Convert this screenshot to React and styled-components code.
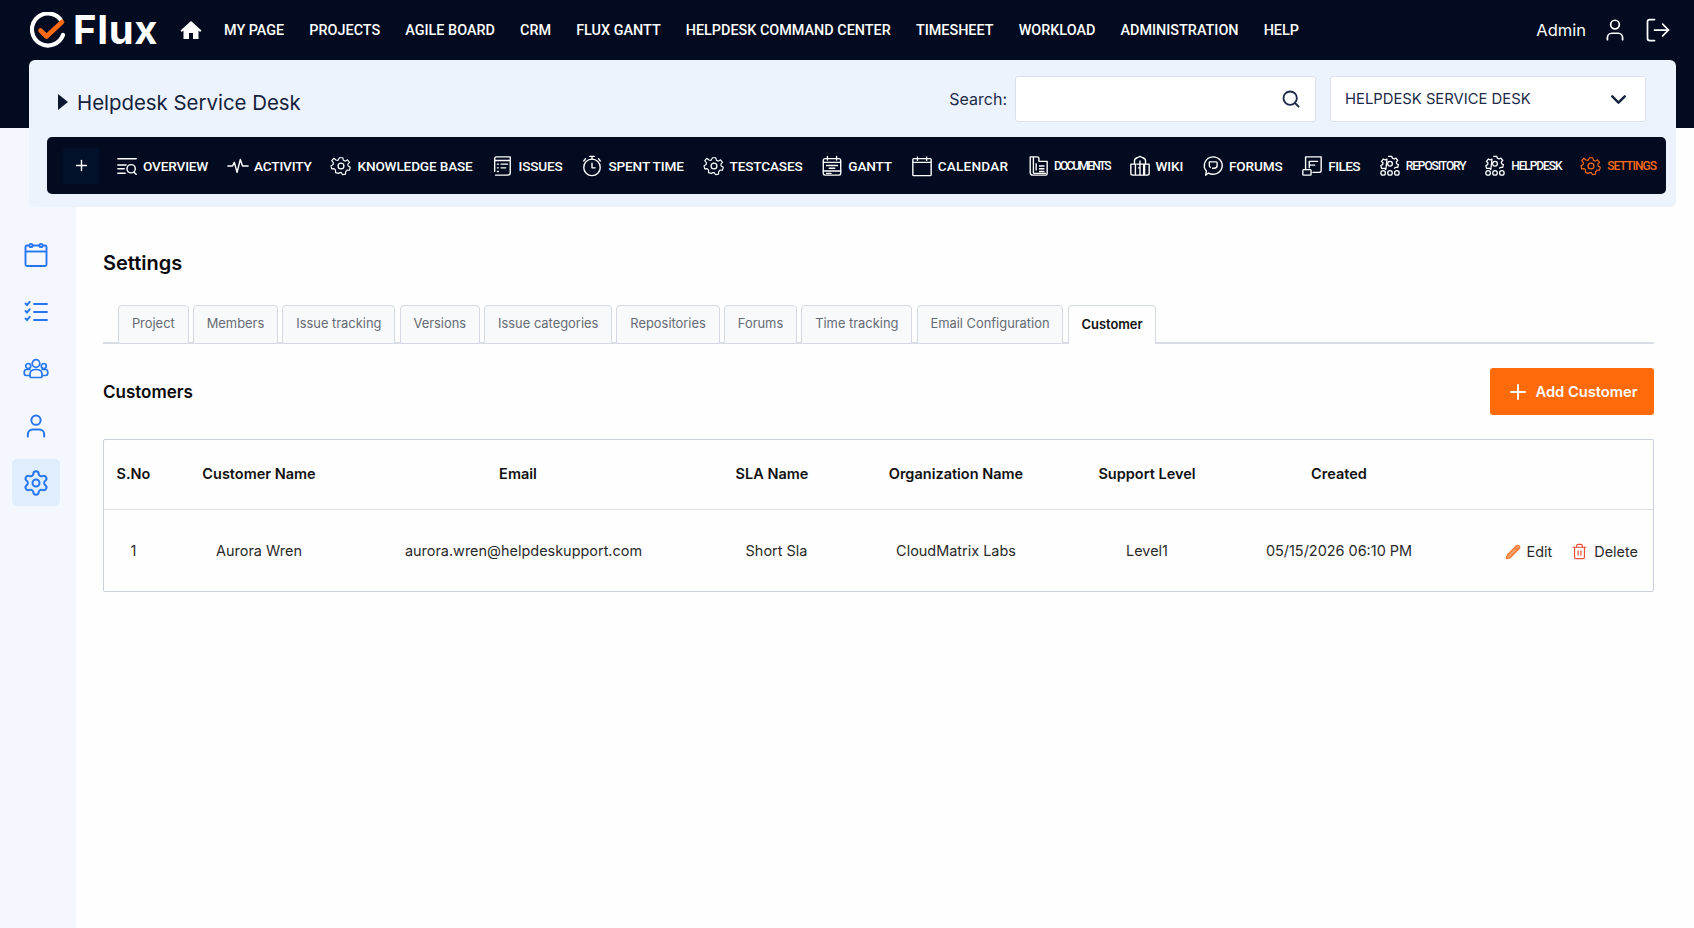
import React from "react";
import styled, { createGlobalStyle } from "styled-components";
import {
  ChevronDown,
  LogOut,
  Pencil,
  Plus,
  Search,
  Settings,
  Trash2,
  User,
} from "lucide-react";

const GlobalStyle = createGlobalStyle`
  html, body {
    margin: 0;
    padding: 0;
    background: #fefefe;
    font-family: Inter, "Liberation Sans", sans-serif;
  }
  * {
    box-sizing: border-box;
  }
`;

const Page = styled.div`
  width: 1694px;
  height: 928px;
  overflow: hidden;
  display: flex;
  flex-direction: column;
`;

const TopArea = styled.div`
  height: 207px;
  flex: none;
  background:
    linear-gradient(#020b20 128px, transparent 128px),
    linear-gradient(90deg, #f4f8fe 76px, #fefefe 76px);
`;

const TopBar = styled.header`
  height: 60px;
  padding: 0 22px 0 30px;
  display: flex;
  align-items: center;
  color: #fff;
`;

const Logo = styled.div`
  display: flex;
  align-items: center;
  gap: 6px;
  width: 149px;
  flex: none;
`;

const LogoText = styled.span`
  font-size: 40px;
  line-height: 1;
  font-weight: 700;
  letter-spacing: 0.7px;
`;

const HomeLink = styled.a`
  display: flex;
  margin: 0 21px 0 0;
  color: #fff;
`;

const MainMenu = styled.nav`
  display: flex;
  gap: 25.1px;
  flex: 1;
`;

const MenuLink = styled.a`
  font-family: Roboto, sans-serif;
  font-size: 14.4px;
  font-weight: 500;
  color: #fff;
  white-space: nowrap;
`;

const UserBox = styled.div`
  display: flex;
  align-items: center;
  gap: 16px;
`;

const UserName = styled.span`
  font-size: 16.5px;
`;

const ProjectPanel = styled.section`
  height: 147px;
  margin: 0 18px 0 29px;
  padding: 16px 10px 13px 18px;
  background: #edf3fc;
  border-radius: 6px;
  display: flex;
  flex-direction: column;
  justify-content: space-between;
`;

const PanelHead = styled.div`
  display: flex;
  align-items: center;
  padding: 0 20px 0 11px;
`;

const ProjectTitle = styled.h2`
  margin: 6px 0 0;
  flex: 1;
  display: flex;
  align-items: center;
  gap: 9px;
  font-size: 20.4px;
  font-weight: 400;
  color: #14213d;
`;

const Caret = styled.span`
  width: 0;
  height: 0;
  border-left: 10px solid #0b1730;
  border-top: 8px solid transparent;
  border-bottom: 8px solid transparent;
`;

const SearchLabel = styled.label`
  font-size: 16px;
  color: #1c2a48;
  margin-right: 8px;
`;

const FieldBox = styled.div`
  height: 46px;
  width: ${(p) => p.$width}px;
  background: #fff;
  border: 1px solid #dbe2ee;
  border-radius: 3px;
  display: flex;
  align-items: center;
  justify-content: space-between;
  padding: 0 14px;
  font-size: 14.8px;
  color: #1c2a48;
  margin-left: ${(p) => p.$gap || 0}px;
`;

const ProjectNav = styled.nav`
  height: 57px;
  background: #020b20;
  border-radius: 5px;
  display: flex;
  align-items: center;
  padding: 0 0 0 16px;
  color: #fff;
`;

const PlusBox = styled.span`
  width: 36px;
  height: 36px;
  margin-right: 17px;
  background: #031029;
  display: flex;
  align-items: center;
  justify-content: center;
  flex: none;
`;

const NavItem = styled.a`
  display: flex;
  align-items: center;
  gap: 5px;
  margin-right: 18.8px;
  font-family: Roboto, sans-serif;
  font-size: ${(p) => (p.$small ? 12 : 13.6)}px;
  font-weight: 500;
  letter-spacing: ${(p) => p.$spacing}px;
  white-space: nowrap;
  color: ${(p) => (p.$active ? "#ff6a13" : "#fff")};
`;

const Body = styled.div`
  flex: 1;
  display: flex;
`;

const SideBar = styled.aside`
  width: 76px;
  flex: none;
  background: #f4f8fe;
  padding: 24px 0 0 12px;
  display: flex;
  flex-direction: column;
  gap: 10px;
`;

const SideItem = styled.a`
  width: 48px;
  height: 47px;
  border-radius: 5px;
  display: flex;
  align-items: center;
  justify-content: center;
  color: #2676f0;
  background: ${(p) => (p.$active ? "#e0edfd" : "transparent")};
`;

const Main = styled.main`
  flex: 1;
  padding: 44px 40px 0 27px;
  background: #fefefe;
`;

const PageTitle = styled.h1`
  margin: 0 0 30px;
  font-size: 20px;
  line-height: 24px;
  font-weight: 600;
  color: #0a0a0a;
`;

const Tabs = styled.div`
  display: flex;
  gap: 4.2px;
  padding-left: 15px;
  border-bottom: 2px solid #d9dce5;
  height: 39px;
`;

const Tab = styled.a`
  height: 39px;
  padding: 0 12.9px 2px;
  display: flex;
  align-items: center;
  justify-content: center;
  font-size: 12.9px;
  font-weight: ${(p) => (p.$active ? 600 : 400)};
  color: ${(p) => (p.$active ? "#111" : "#666b75")};
  background: ${(p) => (p.$active ? "#fefefe" : "#f8f9fb")};
  border: 1px solid #d5d9e3;
  border-bottom: ${(p) => (p.$active ? "none" : "1px solid #d5d9e3")};
  border-radius: 4px 4px 0 0;
  white-space: nowrap;
`;

const SectionHead = styled.div`
  display: flex;
  align-items: center;
  justify-content: space-between;
  margin-top: 24px;
`;

const SectionTitle = styled.h3`
  margin: 0;
  font-size: 17px;
  font-weight: 600;
  color: #0a0a0a;
`;

const AddButton = styled.button`
  width: 164px;
  height: 47px;
  border: none;
  border-radius: 3px;
  background: #ff6a0a;
  color: #fff;
  display: flex;
  align-items: center;
  justify-content: center;
  gap: 5px;
  font-family: inherit;
  font-size: 14.7px;
  font-weight: 600;
`;

const TableBox = styled.div`
  margin-top: 24px;
  border: 1px solid #c9cfdb;
  border-radius: 2px;
`;

const Table = styled.table`
  width: 100%;
  table-layout: fixed;
  border-collapse: collapse;
`;

const Column = styled.col`
  width: ${(p) => p.$width}px;
`;

const HeadCell = styled.th`
  height: 69px;
  padding: 0 ${(p) => p.$right || 0}px 2px 0;
  font-size: 14.5px;
  font-weight: 600;
  color: #111;
  border-bottom: 1px solid #dcdfe6;
`;

const Cell = styled.td`
  height: 82px;
  padding: 0 0 0 ${(p) => p.$left || 0}px;
  text-align: center;
  font-size: 14.45px;
  color: #2a2a2a;
  white-space: nowrap;
`;

const Actions = styled.div`
  display: flex;
  justify-content: flex-end;
  align-items: center;
  padding: 3px 15px 0 0;
  gap: 19px;
`;

const ActionLink = styled.a`
  display: flex;
  align-items: center;
  gap: 6px;
  color: #2a2a2a;
  svg {
    color: ${(p) => p.$tone};
  }
`;

const ActivityIcon = () => (
  <svg width="22" height="22" viewBox="0 0 24 24" fill="none" stroke="currentColor" strokeWidth="1.6" strokeLinecap="round" strokeLinejoin="round">
    <path d="M1 12h5l2-4 3 11 3.500-14 2.500 7h6" />
  </svg>
);

const OverviewIcon = () => (
  <svg width="22" height="22" viewBox="0 0 24 24" fill="none" stroke="currentColor" strokeWidth="1.6" strokeLinecap="round">
    <path d="M2 4h20M2 11h9M2 15h7M2 20h8" />
    <circle cx="16.5" cy="15" r="4.5" />
    <path d="M20 19l2 2" />
  </svg>
);

const KnowledgeIcon = () => (
  <svg width="22" height="22" viewBox="0 0 24 24" fill="none" stroke="currentColor" strokeWidth="1.4" strokeLinejoin="round">
    <path d="M10 2h4l.6 3 2.5 1.100 2.600-1.600 2.400 3-2 2.200.3 2.300 2.600 1.500-1 3.700-3-.2-1.600 2-.1 2.900-3.600.7-1.600-2.500h-2.200L8.700 21l-3.600-1 .1-3-1.700-1.800-3 .2-.8-3.700 2.600-1.500.2-2.400-1.900-2.200 2.400-2.900L5.700 4.700 8 5.400z" transform="translate(1.400 1.200) scale(.9)" />
    <circle cx="12" cy="12" r="3.200" />
  </svg>
);

const IssuesIcon = () => (
  <svg width="22" height="22" viewBox="0 0 24 24" fill="none" stroke="currentColor" strokeWidth="1.5" strokeLinecap="round" strokeLinejoin="round">
    <path d="M4 18V4q0-2 2-2h14M4 6h17M21 2v17q0 3-3 3H5" />
    <path d="M7 10h1M11 10h7M7 14h1M11 14h5M7 18h1" />
  </svg>
);

const TimerIcon = () => (
  <svg width="22" height="22" viewBox="0 0 24 24" fill="none" stroke="currentColor" strokeWidth="1.500" strokeLinecap="round" strokeLinejoin="round">
    <circle cx="12" cy="13.500" r="9" />
    <path d="M9.500 1.500h5M12 1.500v3M19 4l2 2.500M5 4 3 6.500M12 9v5h3.500" />
  </svg>
);

const GanttIcon = () => (
  <svg width="22" height="22" viewBox="0 0 24 24" fill="none" stroke="currentColor" strokeWidth="1.5" strokeLinecap="round">
    <rect x="2.500" y="4" width="19" height="18" rx="2" />
    <path d="M7 1.500v4M17 1.500v4M2.500 8h19M6 11.500h12M9 14.500h6M2.500 17.500h19M6 20h5" />
  </svg>
);

const CalendarIcon = () => (
  <svg width="22" height="22" viewBox="0 0 24 24" fill="none" stroke="currentColor" strokeWidth="1.5">
    <rect x="2" y="4" width="20" height="18.500" rx="1" />
    <path d="M2 8h20M7 1.500v5M17 1.500v5" />
  </svg>
);

const DocumentsIcon = () => (
  <svg width="22" height="22" viewBox="0 0 24 24" fill="none" stroke="currentColor" strokeWidth="1.5" strokeLinejoin="round">
    <path d="M6 2H3.500v17q0 3 3 3h14q1.500 0 1.500-2V7h-9V3.500Q13 2 11 2z" />
    <path d="M7 2v17q0 1 1 1h13" />
    <path d="M10 9v8M13 12h6M13 15h6M13 18h6" />
  </svg>
);

const WikiIcon = () => (
  <svg width="22" height="22" viewBox="0 0 24 24" fill="none" stroke="currentColor" strokeWidth="1.5" strokeLinejoin="round">
    <path d="M2 10h5v12H4q-2 0-2-2zM22 10h-5v12h3q2 0 2-2zM7 22h10" />
    <path d="M6 10V6q0-2 3-3l3-1.500 3 1.500q3 1 3 3v4" />
    <path d="M8 10h8v12M12 6v16M10 14h2" />
  </svg>
);

const ForumsIcon = () => (
  <svg width="22" height="22" viewBox="0 0 24 24" fill="none" stroke="currentColor" strokeWidth="1.5" strokeLinejoin="round" strokeLinecap="round">
    <path d="M12 2a10 9.500 0 1 1-5 17.700L4 22l.8-4.500A10 9.500 0 0 1 12 2z" />
    <path d="M8.500 7.500h7q1 0 1 1v3q0 3-3.500 3h-1.500M8 7.500v4q0 1 1 2" />
  </svg>
);

const FilesIcon = () => (
  <svg width="22" height="22" viewBox="0 0 24 24" fill="none" stroke="currentColor" strokeWidth="1.5" strokeLinejoin="round" strokeLinecap="round">
    <path d="M5 16V2h17v15q0 2-2 2h-7" />
    <path d="M9 7h9M9 11h6M9 7v7" />
    <rect x="2" y="16" width="9" height="6" rx="1" />
  </svg>
);

const RepositoryIcon = () => (
  <svg width="22" height="22" viewBox="0 0 24 24" fill="none" stroke="currentColor" strokeWidth="1.400" strokeLinejoin="round">
    <path d="M10 1.500h4l.5 2 2 .9 2-1 2 2.600-1.600 1.500.3 2 2 1-.8 3H18l-1.500 1.300M7.500 15.800 6 14.500H2.800l-.8-3 2-1 .3-2L2.700 7l2-2.600 2 1 2-.9z" />
    <circle cx="12" cy="9.500" r="2.600" />
    <circle cx="4.500" cy="19.500" r="2.500" />
    <circle cx="12" cy="19.500" r="2.500" />
    <circle cx="19.500" cy="19.500" r="2.500" />
  </svg>
);

const SideCalendarIcon = () => (
  <svg width="28" height="28" viewBox="0 0 28 28" fill="none" stroke="currentColor" strokeWidth="1.900" strokeLinejoin="round">
    <rect x="3.500" y="4.500" width="21" height="20.500" rx="1.500" />
    <path d="M3.500 10.500h21" />
    <circle cx="9" cy="4.500" r="1.600" fill="#f4f8fe" />
    <circle cx="19" cy="4.500" r="1.600" fill="#f4f8fe" />
  </svg>
);

const SideListIcon = () => (
  <svg width="28" height="28" viewBox="0 0 28 28" fill="none" stroke="currentColor" strokeWidth="1.900" strokeLinecap="round" strokeLinejoin="round">
    <path d="M3.500 5.500l1.500 1.700 2.700-3.400M3.500 13l1.500 1.700 2.700-3.400M3.500 20.500l1.500 1.700 2.700-3.400" />
    <path d="M12 6h13M12 14h13M12 22h13" />
  </svg>
);

const UsersIcon = () => (
  <svg width="26" height="26" viewBox="0 0 26 26" fill="none" stroke="currentColor" strokeWidth="1.700" strokeLinejoin="round">
    <circle cx="13" cy="7.500" r="3.800" />
    <circle cx="5.200" cy="10" r="2.500" />
    <circle cx="20.800" cy="10" r="2.500" />
    <path d="M7 20.500v-2.500q0-4.500 6-4.500t6 4.500v2.500q0 1-1 1H8q-1 0-1-1z" />
    <path d="M7.500 13.500h-4Q1.200 13.500 1.200 16.500q0 3 2 3h3.800M18.500 13.500h4q2.300 0 2.300 3t-2 3H19" />
  </svg>
);

const LogoMark = () => (
  <svg width="37" height="37" viewBox="0 0 37 37" fill="none" strokeLinecap="round" strokeLinejoin="round">
    <path d="M30.500 7.500A16 16 0 1 0 33 23" stroke="#fff" strokeWidth="4.200" />
    <path d="M10.500 18.500l6 6L32 10" stroke="#ff6a13" strokeWidth="4.600" />
  </svg>
);

const HomeIcon = () => (
  <svg width="24" height="24" viewBox="0 0 24 24" fill="currentColor">
    <path d="M12 3 1.500 12.500l1.400 1.500L4.500 12.600V21h5.500v-6h4v6h5.500v-8.400l1.600 1.400 1.400-1.500z" />
  </svg>
);

const menu = [
  "MY PAGE",
  "PROJECTS",
  "AGILE BOARD",
  "CRM",
  "FLUX GANTT",
  "HELPDESK COMMAND CENTER",
  "TIMESHEET",
  "WORKLOAD",
  "ADMINISTRATION",
  "HELP",
];

const projectNav = [
  { label: "OVERVIEW", icon: <OverviewIcon /> },
  { label: "ACTIVITY", icon: <ActivityIcon /> },
  { label: "KNOWLEDGE BASE", icon: <KnowledgeIcon /> },
  { label: "ISSUES", icon: <IssuesIcon /> },
  { label: "SPENT TIME", icon: <TimerIcon /> },
  { label: "TESTCASES", icon: <KnowledgeIcon /> },
  { label: "GANTT", icon: <GanttIcon /> },
  { label: "CALENDAR", icon: <CalendarIcon />, spacing: 0.2 },
  { label: "DOCUMENTS", icon: <DocumentsIcon />, small: true, spacing: -1.8 },
  { label: "WIKI", icon: <WikiIcon /> },
  { label: "FORUMS", icon: <ForumsIcon /> },
  { label: "FILES", icon: <FilesIcon />, spacing: -0.6 },
  { label: "REPOSITORY", icon: <RepositoryIcon />, small: true, spacing: -1.1 },
  { label: "HELPDESK", icon: <RepositoryIcon />, small: true, spacing: -1.1 },
  { label: "SETTINGS", icon: <KnowledgeIcon />, small: true, spacing: -0.9, active: true },
];

const tabs = [
  "Project",
  "Members",
  "Issue tracking",
  "Versions",
  "Issue categories",
  "Repositories",
  "Forums",
  "Time tracking",
  "Email Configuration",
];

const columns = [59, 192, 330, 178, 186, 196, 188];

export default function App() {
  return (
    <Page>
      <GlobalStyle />
      <TopArea>
        <TopBar>
          <Logo>
            <LogoMark />
            <LogoText>Flux</LogoText>
          </Logo>
          <HomeLink>
            <HomeIcon />
          </HomeLink>
          <MainMenu>
            {menu.map((item) => (
              <MenuLink key={item}>{item}</MenuLink>
            ))}
          </MainMenu>
          <UserBox>
            <UserName>Admin</UserName>
            <User size={26} strokeWidth={1.6} />
            <LogOut size={28} strokeWidth={1.5} />
          </UserBox>
        </TopBar>
        <ProjectPanel>
          <PanelHead>
            <ProjectTitle>
              <Caret />
              Helpdesk Service Desk
            </ProjectTitle>
            <SearchLabel>Search:</SearchLabel>
            <FieldBox $width={301}>
              <span />
              <Search size={20} strokeWidth={2.2} color="#1c2a48" />
            </FieldBox>
            <FieldBox $width={316} $gap={14}>
              HELPDESK SERVICE DESK
              <ChevronDown size={25} strokeWidth={2.3} color="#14213d" />
            </FieldBox>
          </PanelHead>
          <ProjectNav>
            <PlusBox>
              <Plus size={17} strokeWidth={2} />
            </PlusBox>
            {projectNav.map((item) => (
              <NavItem
                key={item.label}
                $small={item.small}
                $spacing={item.spacing ?? -0.15}
                $active={item.active}
              >
                {item.icon}
                {item.label}
              </NavItem>
            ))}
          </ProjectNav>
        </ProjectPanel>
      </TopArea>
      <Body>
        <SideBar>
          <SideItem>
            <SideCalendarIcon />
          </SideItem>
          <SideItem>
            <SideListIcon />
          </SideItem>
          <SideItem>
            <UsersIcon />
          </SideItem>
          <SideItem>
            <User size={28} strokeWidth={1.7} />
          </SideItem>
          <SideItem $active>
            <Settings size={28} strokeWidth={1.7} />
          </SideItem>
        </SideBar>
        <Main>
          <PageTitle>Settings</PageTitle>
          <Tabs>
            {tabs.map((tab) => (
              <Tab key={tab}>{tab}</Tab>
            ))}
            <Tab $active>Customer</Tab>
          </Tabs>
          <SectionHead>
            <SectionTitle>Customers</SectionTitle>
            <AddButton>
              <Plus size={24} strokeWidth={2} />
              Add Customer
            </AddButton>
          </SectionHead>
          <TableBox>
            <Table>
              <colgroup>
                {columns.map((width, i) => (
                  <Column key={i} $width={width} />
                ))}
                <col />
              </colgroup>
              <thead>
                <tr>
                  <HeadCell>S.No</HeadCell>
                  <HeadCell>Customer Name</HeadCell>
                  <HeadCell $right={4}>Email</HeadCell>
                  <HeadCell $right={4}>SLA Name</HeadCell>
                  <HeadCell>Organization Name</HeadCell>
                  <HeadCell>Support Level</HeadCell>
                  <HeadCell>Created</HeadCell>
                  <HeadCell />
                </tr>
              </thead>
              <tbody>
                <tr>
                  <Cell>1</Cell>
                  <Cell>Aurora Wren</Cell>
                  <Cell $left={7}>aurora.wren@helpdeskupport.com</Cell>
                  <Cell $left={5}>Short Sla</Cell>
                  <Cell>CloudMatrix Labs</Cell>
                  <Cell>Level1</Cell>
                  <Cell>05/15/2026 06:10 PM</Cell>
                  <Cell>
                    <Actions>
                      <ActionLink $tone="#f2762e">
                        <Pencil size={16} strokeWidth={2} fill="#f7a068" />
                        Edit
                      </ActionLink>
                      <ActionLink $tone="#e8503a">
                        <Trash2 size={17} strokeWidth={1.7} />
                        Delete
                      </ActionLink>
                    </Actions>
                  </Cell>
                </tr>
              </tbody>
            </Table>
          </TableBox>
        </Main>
      </Body>
    </Page>
  );
}
